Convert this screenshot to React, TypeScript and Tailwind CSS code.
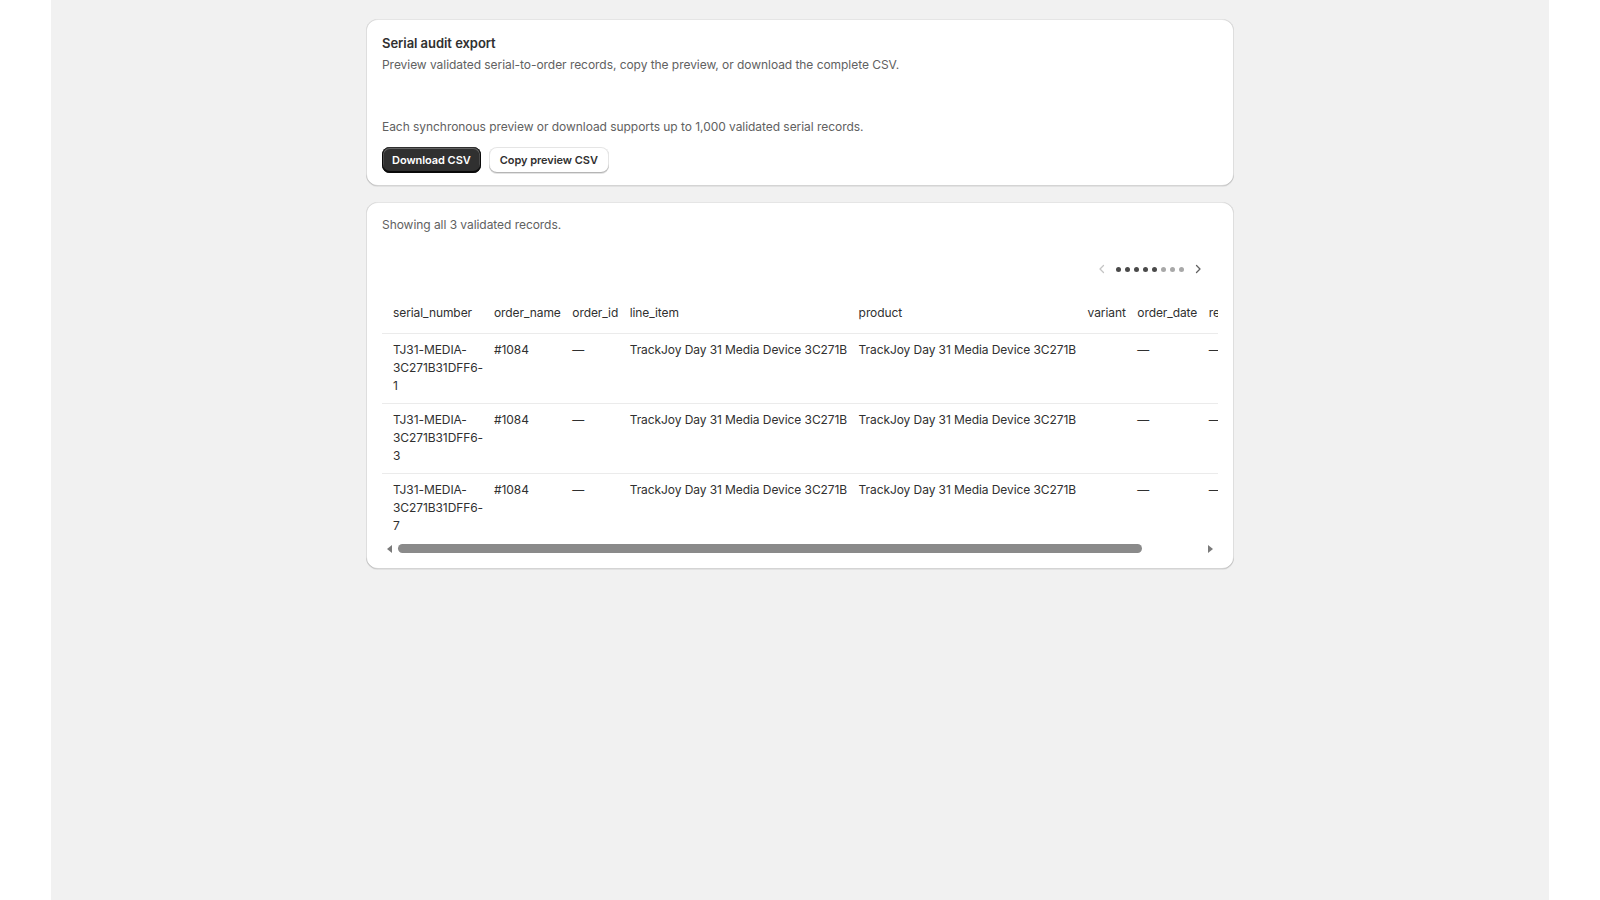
import React from 'react';

const columns = [
  'serial_number',
  'order_name',
  'order_id',
  'line_item',
  'product',
  'variant',
  'order_date',
  'recorded_at',
];

const records = [
  { serial: ['TJ31-MEDIA-', '3C271B31DFF6-', '1'] },
  { serial: ['TJ31-MEDIA-', '3C271B31DFF6-', '3'] },
  { serial: ['TJ31-MEDIA-', '3C271B31DFF6-', '7'] },
].map((r) => ({
  ...r,
  orderName: '#1084',
  orderId: '—',
  lineItem: 'TrackJoy Day 31 Media Device 3C271B',
  product: 'TrackJoy Day 31 Media Device 3C271B',
  variant: '',
  orderDate: '—',
  recordedAt: '—',
}));

function Card({ children, className = '' }: { children: React.ReactNode; className?: string }) {
  return (
    <div
      className={`w-[868px] mx-auto bg-white rounded-xl shadow-[0_1px_0_0_rgba(26,26,26,0.07),inset_0_1px_0_0_rgba(204,204,204,0.5),inset_0_-1px_0_0_rgba(0,0,0,0.17),inset_1px_0_0_0_rgba(0,0,0,0.13),inset_-1px_0_0_0_rgba(0,0,0,0.13)] ${className}`}
    >
      {children}
    </div>
  );
}

function Chevron({ dir, color }: { dir: 'left' | 'right'; color: string }) {
  return (
    <svg width="12" height="12" viewBox="0 0 12 12" fill="none" className={color}>
      <path
        d={dir === 'left' ? 'M7.5 2.5 4 6l3.5 3.5' : 'M4.5 2.5 8 6l-3.5 3.5'}
        stroke="currentColor"
        strokeWidth="1.3"
        strokeLinecap="round"
        strokeLinejoin="round"
      />
    </svg>
  );
}

function ColumnPips() {
  const pips = [true, true, true, true, true, false, false, false];
  return (
    <div className="flex items-center justify-end gap-[6px] pr-[14px]">
      <Chevron dir="left" color="text-[#c4c4c4]" />
      <div className="flex items-center gap-[4px] px-[2px]">
        {pips.map((on, i) => (
          <span
            key={i}
            className={`w-[5px] h-[5px] rounded-full ${on ? 'bg-[#4a4a4a]' : 'bg-[#a8a8a8]'}`}
          />
        ))}
      </div>
      <Chevron dir="right" color="text-[#616161]" />
    </div>
  );
}

// horizontal scroll track under the table
function ScrollBar() {
  return (
    <div className="flex items-center h-[15px] -mt-[2px]">
      <button className="w-[15px] h-[15px] flex items-center justify-center">
        <span className="w-0 h-0 border-y-[4px] border-y-transparent border-r-[5px] border-r-[#7a7a7a]" />
      </button>
      <div className="flex-1 flex items-center">
        <div className="ml-[1px] w-[744px] h-[9px] rounded-full bg-[#8a8a8a]" />
      </div>
      <button className="w-[15px] h-[15px] flex items-center justify-center">
        <span className="w-0 h-0 border-y-[4px] border-y-transparent border-l-[5px] border-l-[#7a7a7a]" />
      </button>
    </div>
  );
}

const cell = 'align-top pt-[7px] pb-[8px] pl-[6px] pr-[5.5px]';

export default function App() {
  return (
    <div className="min-h-screen bg-white font-['Inter','Liberation_Sans',sans-serif] text-[12px] tracking-[-0.05px] text-[#303030]">
      <div className="w-[1498px] mx-auto min-h-screen bg-[#f1f1f1] pt-[19px] flex flex-col gap-4">
        <Card className="px-4 pt-3 pb-[13px]">
          <h2 className="text-[13px] leading-6 font-semibold">Serial audit export</h2>
          <p className="leading-5 text-[#616161]">
            Preview validated serial-to-order records, copy the preview, or download the complete CSV.
          </p>
          <p className="mt-[42px] leading-5 text-[#616161]">
            Each synchronous preview or download supports up to 1,000 validated serial records.
          </p>
          <div className="mt-[10px] flex gap-2">
            <button className="h-[26px] px-[10px] rounded-lg bg-[#303030] text-white text-[11px] font-semibold shadow-[inset_0_-1px_0_1px_rgba(0,0,0,0.8),inset_0_0_0_1px_#303030,inset_0_0.5px_0_1.5px_rgba(255,255,255,0.25)]">
              Download CSV
            </button>
            <button className="h-[26px] px-[11px] rounded-lg bg-white text-[11px] font-semibold text-[#303030] shadow-[0_1px_0_0_#e3e3e3,inset_0_-1px_0_0_#b5b5b5,inset_0_0_0_1px_rgba(0,0,0,0.1)]">
              Copy preview CSV
            </button>
          </div>
        </Card>

        <Card className="px-4 pt-[13px] pb-[13px]">
          <p className="leading-5 text-[#616161]">Showing all 3 validated records.</p>
          <div className="mt-[28px]">
            <ColumnPips />
          </div>
          <div className="mt-[21px] overflow-hidden">
            <table className="border-collapse leading-[18px] whitespace-nowrap tracking-[-0.08px]">
              <thead>
                <tr className="border-b border-[#ebebeb]">
                  {columns.map((c, i) => (
                    <th
                      key={c}
                      className={`pt-[8px] pb-[11px] pr-[5.5px] text-left font-normal text-[#303030] ${i === 0 ? 'pl-[11px]' : 'pl-[6px]'}`}
                    >
                      {c}
                    </th>
                  ))}
                </tr>
              </thead>
              <tbody>
                {records.map((r, ri) => (
                  <tr key={ri} className={ri < records.length - 1 ? 'border-b border-[#ebebeb]' : ''}>
                    <td className="align-top pt-[7px] pb-[8px] pl-[11px] pr-[5px]">
                      <div className="w-[90px] whitespace-normal">
                        {r.serial[0]}
                        <wbr />
                        {r.serial[1]}
                        <wbr />
                        {r.serial[2]}
                      </div>
                    </td>
                    <td className={cell}>{r.orderName}</td>
                    <td className={cell}>{r.orderId}</td>
                    <td className={cell}>{r.lineItem}</td>
                    <td className={cell}>{r.product}</td>
                    <td className={cell}>{r.variant}</td>
                    <td className={cell}>{r.orderDate}</td>
                    <td className={cell}>{r.recordedAt}</td>
                  </tr>
                ))}
              </tbody>
            </table>
          </div>
          <ScrollBar />
        </Card>
      </div>
    </div>
  );
}
